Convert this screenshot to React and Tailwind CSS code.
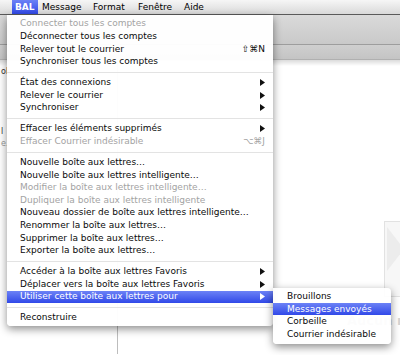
import React from "react";

const items = [
  { t: "Connecter tous les comptes", d: true },
  { t: "Déconnecter tous les comptes" },
  { t: "Relever tout le courrier", k: "⇧⌘N" },
  { t: "Synchroniser tous les comptes" },
  "sep",
  { t: "État des connexions", a: true },
  { t: "Relever le courrier", a: true },
  { t: "Synchroniser", a: true },
  "sep",
  { t: "Effacer les éléments supprimés", a: true },
  { t: "Effacer Courrier indésirable", d: true, k: "⌥⌘J" },
  "sep",
  { t: "Nouvelle boîte aux lettres…" },
  { t: "Nouvelle boîte aux lettres intelligente…" },
  { t: "Modifier la boîte aux lettres intelligente…", d: true },
  { t: "Dupliquer la boîte aux lettres intelligente", d: true },
  { t: "Nouveau dossier de boîte aux lettres intelligente…" },
  { t: "Renommer la boîte aux lettres…" },
  { t: "Supprimer la boîte aux lettres…" },
  { t: "Exporter la boîte aux lettres…" },
  "sep",
  { t: "Accéder à la boîte aux lettres Favoris", a: true },
  { t: "Déplacer vers la boîte aux lettres Favoris", a: true },
  { t: "Utiliser cette boîte aux lettres pour", a: true, h: true },
  "sep",
  { t: "Reconstruire" },
];

const sub = [
  { t: "Brouillons" },
  { t: "Messages envoyés", h: true },
  { t: "Corbeille" },
  { t: "Courrier indésirable" },
];

function Arrow({ white }) {
  return (
    <svg width="5" height="7" viewBox="0 0 5 7" className="block">
      <path d="M0 0 L5 3.5 L0 7 Z" fill={white ? "#ffffff" : "#111111"} />
    </svg>
  );
}

function Row({ it }) {
  const hl = it.h;
  return (
    <div
      className={
        "h-[12.6px] flex items-center pl-[13px] pr-[8px] leading-none " +
        (hl
          ? "bg-[linear-gradient(to_bottom,#6c82f6,#3149e8)] text-white"
          : it.d
          ? "text-[#a3a3a3]"
          : "text-[#0a0a0a]")
      }
    >
      <span className="flex-1 whitespace-nowrap">{it.t}</span>
      {it.k && <span className="whitespace-nowrap">{it.k}</span>}
      {it.a && <Arrow white={hl} />}
    </div>
  );
}

export default function App() {
  return (
    <div className="relative w-[400px] h-[355px] overflow-hidden bg-white font-['DejaVu_Sans',sans-serif] text-[9px]">
      {/* menubar */}
      <div className="h-[15px] flex items-stretch bg-[linear-gradient(to_bottom,#f6f6f6,#d9d9d9)] border-b border-[#5a5a5a] leading-none">
        <div className="ml-[12px] w-[26px] pl-[3px] flex items-center bg-[linear-gradient(to_bottom,#6c82f6,#3149e8)] text-white font-bold">
          BAL
        </div>
        <div className="w-[51px] pl-[4px] flex items-center text-black">Message</div>
        <div className="w-[45px] pl-[4px] flex items-center text-black">Format</div>
        <div className="w-[46px] pl-[4px] flex items-center text-black">Fenêtre</div>
        <div className="pl-[4px] flex items-center text-black">Aide</div>
      </div>
      {/* toolbar */}
      <div className="h-[30px] bg-[linear-gradient(to_bottom,#dadada,#c9c9c9)] border-b border-[#9d9d9d]" />
      <div className="h-[15px] bg-[linear-gradient(to_bottom,#cfcfcf,#c4c4c4)] border-b border-[#b0b0b0]" />
      {/* content */}
      <div className="relative flex h-[294px]">
        <div className="absolute left-0 right-0 top-0 h-[6px] bg-[linear-gradient(to_bottom,rgba(0,0,0,0.14),rgba(0,0,0,0))]" />
        <div className="w-[118px] border-r border-[#bdbdbd] flex flex-col pt-[6px] pl-[1px] text-[8px] text-[#333] leading-[12px]">
          <span className="h-[12px]">ol</span>
          <span className="h-[12px] mt-[48px]">l</span>
          <span className="h-[12px] text-[#999]">e.</span>
        </div>
        <div className="flex-1 relative">
          <div className="absolute left-[266px] top-[159px]">
            <svg width="20" height="80" viewBox="0 0 20 80">
              <rect x="0.5" y="2.5" width="30" height="75" fill="#f7f7f7" stroke="#e2e2e2" />
              <path d="M3 8 L20 30 L3 52 Z" fill="#ececec" />
            </svg>
          </div>
          <div className="absolute left-[229px] top-[254px] text-[13px] font-bold text-[#d4d4d4] whitespace-nowrap leading-none">
            Aucun message
          </div>
        </div>
      </div>

      {/* main dropdown menu */}
      <div className="absolute left-[7px] top-[15px] w-[266px] pt-[2.7px] pb-[2px] bg-[rgba(255,255,255,0.97)] rounded-b-[4px] shadow-[0_3px_9px_rgba(0,0,0,0.45)]">
        {items.map((it, i) =>
          it === "sep" ? (
            <div key={i} className="h-[8.4px] flex items-center">
              <div className="h-px w-full bg-[#e3e3e3]" />
            </div>
          ) : (
            <Row key={i} it={it} />
          )
        )}
      </div>

      {/* submenu */}
      <div className="absolute left-[273px] top-[288px] w-[118px] pt-[2.2px] pb-[3px] bg-[rgba(255,255,255,0.93)] rounded-[4px] rounded-tl-none shadow-[0_3px_9px_rgba(0,0,0,0.45)]">
        {sub.map((it, i) => (
          <div
            key={i}
            className={
              "h-[12.6px] flex items-center pl-[14px] leading-none whitespace-nowrap " +
              (it.h
                ? "bg-[linear-gradient(to_bottom,#6c82f6,#3149e8)] text-white"
                : "text-[#0a0a0a]")
            }
          >
            {it.t}
          </div>
        ))}
      </div>
    </div>
  );
}
